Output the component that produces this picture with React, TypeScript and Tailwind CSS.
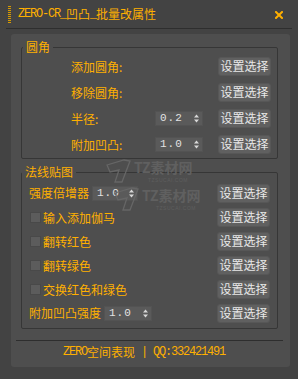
import React from 'react';

const CJK = "font-['Noto_Sans_CJK_SC','Noto_Sans',sans-serif]";
const MONO = "font-['Liberation_Mono','DejaVu_Sans_Mono',monospace]";

function Btn() {
  return (
    <div className={`w-[53px] h-[19px] shrink-0 rounded-[3px] bg-[#606060] border border-[#575757] flex items-center justify-center text-[12px] leading-[12px] text-[#e8e8e8] ${CJK}`}>
      设置选择
    </div>
  );
}

function Spin({ value, w }: { value: string; w: string }) {
  return (
    <div className={`${w} h-[15px] shrink-0 bg-[#5a5a5a] border border-[#535353] flex items-center justify-between pl-[4px] pr-[3px]`}>
      <span className={`text-[11px] leading-[11px] tracking-[1px] text-[#e2e2e2] ${MONO}`}>{value}</span>
      <svg width="5" height="9" viewBox="0 0 5 9" className="shrink-0">
        <path d="M2.5 0.5 L5 3.5 L0 3.5 Z" fill="#d8d8d8" />
        <path d="M0 5.5 L5 5.5 L2.5 8.5 Z" fill="#d8d8d8" />
      </svg>
    </div>
  );
}

function Check() {
  return <div className="w-[11px] h-[11px] shrink-0 bg-[#5c5c5c] border border-[#494949]" />;
}

function Label({ children }: { children: React.ReactNode }) {
  return <span className={`text-[12px] leading-[12px] text-[#ffb000] whitespace-nowrap ${CJK}`}>{children}</span>;
}

function Watermark({ top, left }: { top: number; left: number }) {
  return (
    <div className="absolute pointer-events-none flex items-start" style={{ top, left }}>
      <svg width="28" height="26" viewBox="0 0 28 26" className="mt-[-2px]">
        <path d="M3 7 L20 2 L26 3 L18 24 L11 24 L15 12 L6 14 Z" fill="none" stroke="#666666" strokeWidth="1.3" />
      </svg>
      <div className="flex flex-col ml-[2px]">
        <span className={`text-[14px] leading-[14px] font-bold text-[#606060] ${CJK}`}>TZ素材网</span>
        <span className={`text-[5px] leading-[5px] mt-[4px] ml-[14px] tracking-[0.5px] text-[#5e5e5e] font-['Liberation_Sans',sans-serif]`}>TZSUCAI.COM</span>
      </div>
    </div>
  );
}

export default function App() {
  return (
    <div className="relative w-[298px] h-[379px] bg-[#434343] flex flex-col overflow-hidden">
      {/* Title bar */}
      <div className="h-[28px] flex items-center pl-[8px] pr-[15px]">
        <div className="w-[3px] h-[17px] bg-[repeating-linear-gradient(to_bottom,#d89a00_0px,#d89a00_1px,transparent_1px,transparent_2px)]" />
        <div className="ml-[7px] flex items-center text-[#ffb000] text-[12px] leading-[12px]">
          <span className={`${MONO} text-[12px] tracking-[-1.2px]`}>ZERO-CR_</span>
          <span className={CJK}>凹凸</span>
          <span className={`${MONO} text-[12px] tracking-[-1.2px]`}>_</span>
          <span className={CJK}>批量改属性</span>
        </div>
        <svg width="8" height="8" viewBox="0 0 8 8" className="ml-auto mt-[2px]">
          <path d="M1 1 L7 7 M7 1 L1 7" stroke="#ffb000" strokeWidth="2" strokeLinecap="square" />
        </svg>
      </div>
      <div className="mx-[6px] h-px bg-[#2e2e2e]" />

      {/* Panel */}
      <div className="mt-[5px] ml-[11px] w-[279px] h-[333px] rounded-[3px] bg-[#4e4e4e] flex flex-col pt-[7px]">
        {/* Group 1 */}
        <fieldset className="ml-[10px] w-[257px] border border-[#363636] rounded-[2px] pb-[1px]">
          <legend className={`ml-[1px] px-[3px] text-[12px] leading-[12px] text-[#ffb000] ${CJK}`}>圆角</legend>
          {[
            { l: '添加圆角:', s: null },
            { l: '移除圆角:', s: null },
            { l: '半径:', s: '0.2' },
            { l: '附加凹凸:', s: '1.0' },
          ].map((r) => (
            <div key={r.l} className="h-[26px] flex items-center pl-[49px] pr-[6px]">
              <div className="flex-1">
                <Label>{r.l}</Label>
              </div>
              {r.s ? (
                <div className="mr-[15px]">
                  <Spin value={r.s} w="w-[48px]" />
                </div>
              ) : null}
              <Btn />
            </div>
          ))}
        </fieldset>

        {/* Group 2 */}
        <fieldset className="mt-[7px] ml-[10px] w-[257px] border border-[#363636] rounded-[2px] pt-[3px] pb-[3px]">
          <legend className={`ml-[0px] px-[3px] text-[12px] leading-[12px] text-[#ffb000] ${CJK}`}>法线贴图</legend>
          <div className="h-[24px] flex items-center pl-[7px] pr-[7px]">
            <Label>强度倍增器</Label>
            <div className="ml-[3px]">
              <Spin value="1.0" w="w-[46px]" />
            </div>
            <div className="ml-auto">
              <Btn />
            </div>
          </div>
          {['输入添加伽马', '翻转红色', '翻转绿色', '交换红色和绿色'].map((t) => (
            <div key={t} className="h-[24px] flex items-center pl-[8px] pr-[7px]">
              <Check />
              <div className="ml-[2px]">
                <Label>{t}</Label>
              </div>
              <div className="ml-auto">
                <Btn />
              </div>
            </div>
          ))}
          <div className="h-[24px] flex items-center pl-[7px] pr-[7px]">
            <Label>附加凹凸强度</Label>
            <div className="ml-[3px]">
              <Spin value="1.0" w="w-[48px]" />
            </div>
            <div className="ml-auto">
              <Btn />
            </div>
          </div>
        </fieldset>

        {/* Footer */}
        <div className="mt-[11px] ml-[5px] mr-[7px] h-px bg-[#2e2e2e]" />
        <div className="mt-[3px] h-[16px] pl-[52px] flex items-center text-[#ffb000] text-[12px] leading-[12px]">
          <span className={`${MONO} text-[12px] tracking-[-1.2px]`}>ZERO</span>
          <span className={CJK}>空间表现</span>
          <span className={`${MONO} text-[12px] tracking-[-1.2px] whitespace-pre`}>{' | QQ:332421491'}</span>
        </div>
      </div>

      <Watermark top={160} left={104} />
      <Watermark top={188} left={112} />
    </div>
  );
}
